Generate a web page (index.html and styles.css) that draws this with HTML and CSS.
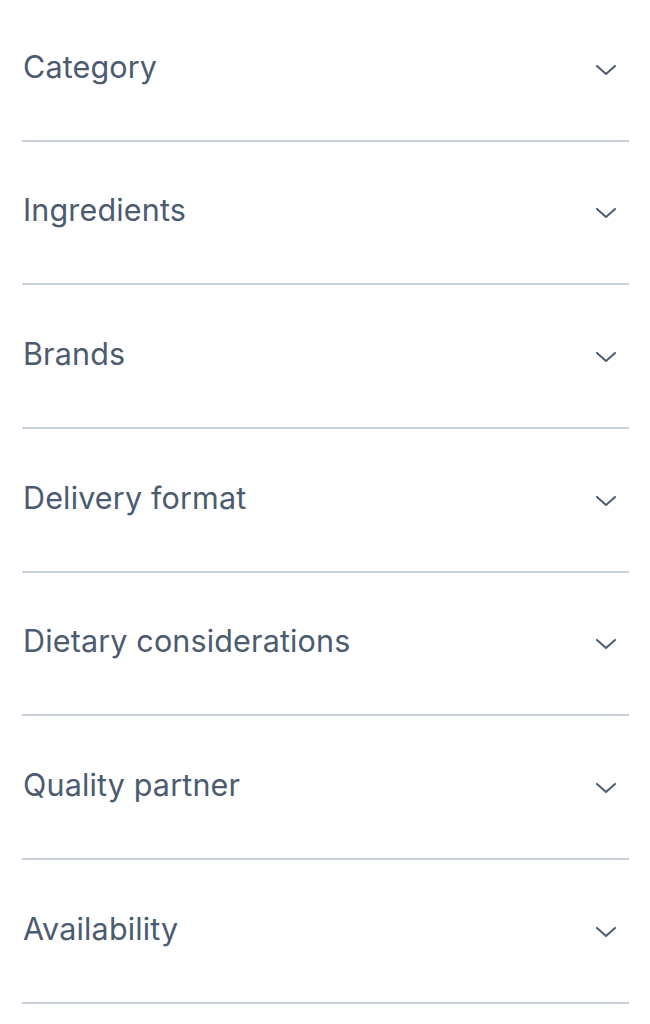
FILE: index.html
```html
<!DOCTYPE html>
<html lang="en">
<head>
<meta charset="utf-8">
<title>Filters</title>
<link rel="stylesheet" href="styles.css">
</head>
<body>
<div class="filters">
  <div class="row"><span class="label">Category</span><svg class="chev" viewBox="0 0 20 10"><path d="M1 1 L10 9 L19 1"/></svg></div>
  <div class="row"><span class="label">Ingredients</span><svg class="chev" viewBox="0 0 20 10"><path d="M1 1 L10 9 L19 1"/></svg></div>
  <div class="row"><span class="label">Brands</span><svg class="chev" viewBox="0 0 20 10"><path d="M1 1 L10 9 L19 1"/></svg></div>
  <div class="row"><span class="label">Delivery format</span><svg class="chev" viewBox="0 0 20 10"><path d="M1 1 L10 9 L19 1"/></svg></div>
  <div class="row"><span class="label">Dietary considerations</span><svg class="chev" viewBox="0 0 20 10"><path d="M1 1 L10 9 L19 1"/></svg></div>
  <div class="row"><span class="label">Quality partner</span><svg class="chev" viewBox="0 0 20 10"><path d="M1 1 L10 9 L19 1"/></svg></div>
  <div class="row"><span class="label">Availability</span><svg class="chev" viewBox="0 0 20 10"><path d="M1 1 L10 9 L19 1"/></svg></div>
</div>
</body>
</html>
```
FILE: styles.css
```css
html, body {
  margin: 0;
  padding: 0;
  background: #ffffff;
}
.filters {
  margin-top: -2px;
  margin-left: 22px;
  width: 607px;
  display: flex;
  flex-direction: column;
}
.row {
  height: 143.67px;
  border-bottom: 2px solid #c8d1dc;
  display: flex;
  align-items: center;
  justify-content: space-between;
  padding-left: 1px;
  padding-right: 13px;
  box-sizing: border-box;
}
.label {
  font-family: Inter, "Noto Sans", sans-serif;
  font-size: 30.5px;
  letter-spacing: 0.15px;
  color: #4b5b70;
  line-height: 1;
  margin-bottom: 4px;
}
.chev {
  width: 20px;
  height: 10px;
  margin-top: 2px;
  fill: none;
  stroke: #4b5b70;
  stroke-width: 2;
  stroke-linecap: round;
  stroke-linejoin: round;
}
```
